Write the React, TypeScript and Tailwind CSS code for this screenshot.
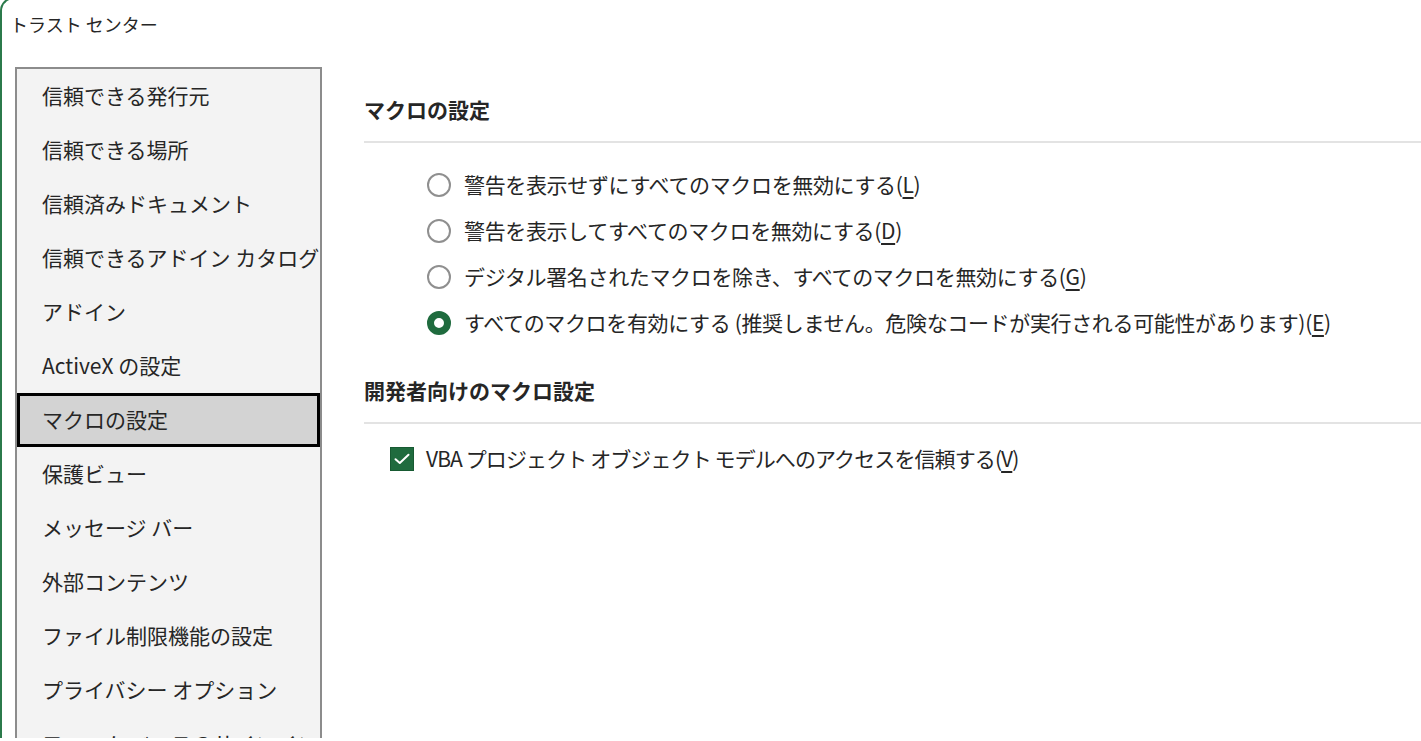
import { useState } from "react"

const navItems = [
  "信頼できる発行元",
  "信頼できる場所",
  "信頼済みドキュメント",
  "信頼できるアドイン カタログ",
  "アドイン",
  "ActiveX の設定",
  "マクロの設定",
  "保護ビュー",
  "メッセージ バー",
  "外部コンテンツ",
  "ファイル制限機能の設定",
  "プライバシー オプション",
  "フォーム ベースのサインイン",
]

const macroOptions = [
  { id: "L", label: "警告を表示せずにすべてのマクロを無効にする" },
  { id: "D", label: "警告を表示してすべてのマクロを無効にする" },
  { id: "G", label: "デジタル署名されたマクロを除き、すべてのマクロを無効にする" },
  { id: "E", label: "すべてのマクロを有効にする (推奨しません。危険なコードが実行される可能性があります)" },
]

function Radio({ checked }: { checked: boolean }) {
  if (checked) {
    return (
      <span className="w-[24px] h-[24px] rounded-full border-[7px] border-[#1f6b3e] bg-white shrink-0" />
    )
  }
  return <span className="w-[24px] h-[24px] rounded-full border-2 border-[#8f8f8f] bg-white shrink-0" />
}

export default function App() {
  const [selected, setSelected] = useState("マクロの設定")
  const [macro, setMacro] = useState("E")
  const [trustVba, setTrustVba] = useState(true)

  return (
    <div
      className="h-[741px] w-[1421px] overflow-hidden bg-white text-[#262626] -mt-[3px] border-l-2 border-t-2 border-[#2b7a4b] rounded-tl-[14px] flex"
      style={{ fontFamily: '"Noto Sans CJK JP", "Noto Sans", sans-serif' }}
    >
      {/* left pane */}
      <div className="w-[320px] shrink-0 pl-[8px]">
        <div className="mt-[10px] text-[18px] leading-[30px] whitespace-nowrap">トラスト センター</div>
        <div className="mt-[28px] ml-[5px] w-[307px] border-2 border-[#8c8c8c] bg-[#f3f3f3]">
          {navItems.map((item) => (
            <div
              key={item}
              onClick={() => setSelected(item)}
              className={
                item === selected
                  ? "h-[54px] flex items-center pl-[22px] border-[3px] border-black bg-[#d3d3d3] text-[21px] whitespace-nowrap overflow-hidden"
                  : "h-[54px] flex items-center pl-[25px] text-[21px] whitespace-nowrap overflow-hidden"
              }
            >
              {item}
            </div>
          ))}
        </div>
      </div>

      {/* right pane */}
      <div className="flex-1 pl-[42px] pt-[95px]">
        <div className="text-[21px] leading-[30px] font-bold">マクロの設定</div>
        <div className="mt-[17px] h-[2px] bg-[#e3e3e3]" />
        <div className="mt-[19px] pl-[63px]">
          {macroOptions.map((o) => (
            <div
              key={o.id}
              onClick={() => setMacro(o.id)}
              className="h-[46px] flex items-center gap-[13px] text-[21px] whitespace-nowrap"
            >
              <Radio checked={macro === o.id} />
              <span className="tracking-[-0.35px]">
                {o.label}(<span className="underline underline-offset-[4px]">{o.id}</span>)
              </span>
            </div>
          ))}
        </div>

        <div className="mt-[29px] text-[21px] leading-[30px] font-bold">開発者向けのマクロ設定</div>
        <div className="mt-[17px] h-[2px] bg-[#e3e3e3]" />
        <div
          className="mt-[12px] ml-[26px] h-[46px] flex items-center gap-[12px] text-[21px] whitespace-nowrap"
          onClick={() => setTrustVba(!trustVba)}
        >
          <span
            className={
              trustVba
                ? "w-[24px] h-[24px] flex items-center justify-center bg-[#1f6b3e] border border-[#175a32] shrink-0"
                : "w-[24px] h-[24px] border-2 border-[#8f8f8f] bg-white shrink-0"
            }
          >
            {trustVba && (
              <svg width="16" height="12" viewBox="0 0 16 12" fill="none">
                <path d="M1.5 6.2 L5.8 10 L14.5 1.8" stroke="white" strokeWidth="2" strokeLinecap="round" strokeLinejoin="round" />
              </svg>
            )}
          </span>
          <span className="tracking-[-0.9px]">
            VBA プロジェクト オブジェクト モデルへのアクセスを信頼する(<span className="underline underline-offset-[4px]">V</span>)
          </span>
        </div>
      </div>
    </div>
  )
}
